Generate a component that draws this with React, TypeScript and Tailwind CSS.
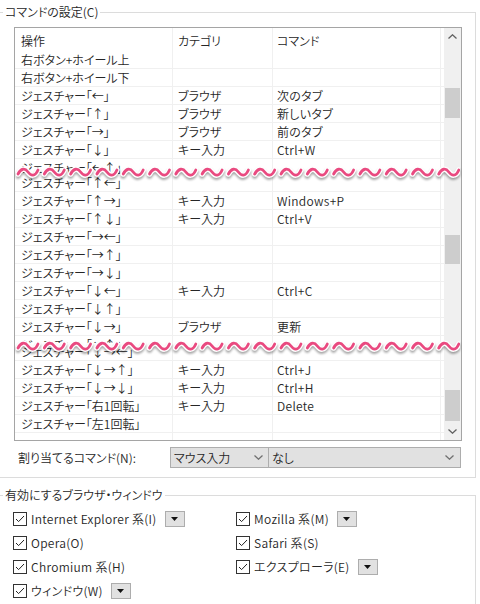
import clsx from "clsx";

type Row = { op: string; cat?: string; cmd?: string; cut?: string };

const rows: Row[] = [
  { op: "右ボタン+ホイール上" },
  { op: "右ボタン+ホイール下" },
  { op: "ジェスチャー「←」", cat: "ブラウザ", cmd: "次のタブ" },
  { op: "ジェスチャー「↑」", cat: "ブラウザ", cmd: "新しいタブ" },
  { op: "ジェスチャー「→」", cat: "ブラウザ", cmd: "前のタブ" },
  { op: "ジェスチャー「↓」", cat: "キー入力", cmd: "Ctrl+W" },
  { op: "ジェスチャー「←↑」", cut: "h-[15px]" },
  { op: "ジェスチャー「↑←」" },
  { op: "ジェスチャー「↑→」", cat: "キー入力", cmd: "Windows+P" },
  { op: "ジェスチャー「↑↓」", cat: "キー入力", cmd: "Ctrl+V" },
  { op: "ジェスチャー「→←」" },
  { op: "ジェスチャー「→↑」" },
  { op: "ジェスチャー「→↓」" },
  { op: "ジェスチャー「↓←」", cat: "キー入力", cmd: "Ctrl+C" },
  { op: "ジェスチャー「↓↑」" },
  { op: "ジェスチャー「↓→」", cat: "ブラウザ", cmd: "更新" },
  { op: "ジェスチャー「←↑←」", cut: "h-[7px]" },
  { op: "ジェスチャー「↓→←」" },
  { op: "ジェスチャー「↓→↑」", cat: "キー入力", cmd: "Ctrl+J" },
  { op: "ジェスチャー「↓→↓」", cat: "キー入力", cmd: "Ctrl+H" },
  { op: "ジェスチャー「右1回転」", cat: "キー入力", cmd: "Delete" },
  { op: "ジェスチャー「左1回転」" },
];

const browsers = [
  [
    { label: "Internet Explorer 系(I)", drop: true },
    { label: "Mozilla 系(M)", drop: true },
  ],
  [{ label: "Opera(O)" }, { label: "Safari 系(S)" }],
  [{ label: "Chromium 系(H)" }, { label: "エクスプローラ(E)", drop: true }],
  [{ label: "ウィンドウ(W)", drop: true }],
];

const Wave = ({ className }: { className: string }) => (
  <svg
    className={clsx(
      "absolute left-[1px] h-[16px] w-[444px] drop-shadow-[0_2px_1px_rgba(0,0,0,0.35)]",
      className,
    )}
    viewBox="0 0 444 16"
  >
    {Array.from({ length: 17 }).map((_, i) => (
      <g key={i} transform={`translate(${i * 26.3 + 2} 4)`}>
        <path
          d="M0 6 C3 0 7 0 10 4 S17 9 20 2"
          fill="none"
          stroke="#fff"
          strokeWidth={5.5}
          strokeLinecap="round"
        />
        <path
          d="M0 6 C3 0 7 0 10 4 S17 9 20 2"
          fill="none"
          stroke="#e94a80"
          strokeWidth={2.8}
          strokeLinecap="round"
        />
      </g>
    ))}
  </svg>
);

const Chevron = ({ up, className }: { up?: boolean; className?: string }) => (
  <svg width="9" height="5" viewBox="0 0 9 5" className={className}>
    <path
      d={up ? "M0.5 4.5 L4.5 0.8 L8.5 4.5" : "M0.5 0.5 L4.5 4.2 L8.5 0.5"}
      fill="none"
      stroke="currentColor"
      strokeWidth={1.3}
    />
  </svg>
);

const Check = () => (
  <span className="flex h-[14px] w-[14px] shrink-0 items-center justify-center border border-[#333] bg-white">
    <svg width="12" height="12" viewBox="0 0 12 12">
      <path d="M2 6 L4.6 8.6 L10 3" fill="none" stroke="#222" strokeWidth={1} />
    </svg>
  </span>
);

const DropBtn = () => (
  <span className="ml-[8px] flex h-[16px] w-[20px] items-center justify-center border border-[#adadad] bg-[#e1e1e1]">
    <svg width="7" height="4" viewBox="0 0 7 4">
      <path d="M0 0H7L3.5 4Z" fill="#111" />
    </svg>
  </span>
);

const GroupTitle = ({ children }: { children: string }) => (
  <div className="-mt-[9px] ml-[3px] w-fit bg-white px-[2px] leading-[16px]">{children}</div>
);

export default function App() {
  return (
    <div className="h-[604px] w-[480px] overflow-hidden bg-white pt-[12px] font-['Noto_Sans_CJK_JP',sans-serif] text-[12px] [font-weight:350] text-[#262626] [font-feature-settings:'palt']">
      {/* コマンドの設定 */}
      <div className="mr-[4px] h-[466px] border-t border-r border-b border-[#dcdcdc]">
        <GroupTitle>コマンドの設定(C)</GroupTitle>

        <div className="relative mt-[7px] ml-[14px] flex h-[414px] w-[448px] border border-[#a5a5a5]">
          <div className="flex w-[429px] flex-col">
            <div className="flex h-[23px] shrink-0 items-center leading-[17px]">
              <div className="h-full w-[158px] border-r border-[#f0f0f0] pt-[4px] pl-[6px]">操作</div>
              <div className="h-full w-[100px] border-r border-[#f0f0f0] pt-[4px] pl-[5px]">カテゴリ</div>
              <div className="h-full w-[168px] border-r border-[#f0f0f0] pt-[4px] pl-[4px]">コマンド</div>
            </div>
            {rows.map((r) => (
              <div
                key={r.op}
                className={clsx(
                  "flex shrink-0 overflow-hidden leading-[17px]",
                  r.cut ? r.cut : "h-[18px] border-b border-[#f0f0f0]",
                )}
              >
                <div className="w-[158px] shrink-0 border-r border-[#f0f0f0] pl-[6px] whitespace-nowrap">{r.op}</div>
                <div className="w-[100px] shrink-0 border-r border-[#f0f0f0] pl-[5px]">{r.cat}</div>
                <div className="w-[168px] shrink-0 border-r border-[#f0f0f0] pl-[4px] tracking-[0.3px]">{r.cmd}</div>
              </div>
            ))}
            <div className="flex flex-1">
              <div className="w-[158px] border-r border-[#f0f0f0]" />
              <div className="w-[100px] border-r border-[#f0f0f0]" />
              <div className="w-[168px] border-r border-[#f0f0f0]" />
            </div>
          </div>

          {/* scrollbar */}
          <div className="flex w-[17px] flex-col bg-[#f0f0f0] text-[#606060]">
            <div className="flex h-[17px] items-center justify-center">
              <Chevron up />
            </div>
            <div className="h-[43px]" />
            <div className="mx-[1px] h-[30px] bg-[#cdcdcd]" />
            <div className="h-[117px]" />
            <div className="mx-[1px] h-[29px] bg-[#cdcdcd]" />
            <div className="h-[126px]" />
            <div className="mx-[1px] h-[31px] bg-[#cdcdcd]" />
            <div className="flex-1" />
            <div className="flex h-[17px] items-center justify-center">
              <Chevron />
            </div>
          </div>

          <Wave className="top-[136px]" />
          <Wave className="top-[310px]" />
        </div>

        <div className="mt-[6px] flex h-[21px] items-center">
          <div className="w-[170px] pl-[18px]">割り当てるコマンド(N):</div>
          <div className="flex h-full w-[99px] items-center justify-between border border-[#adadad] bg-[#e1e1e1] pr-[5px] pl-[3px]">
            <span>マウス入力</span>
            <Chevron className="text-[#707070]" />
          </div>
          <div className="-ml-px flex h-full w-[193px] items-center justify-between border border-[#adadad] bg-[#e1e1e1] pr-[6px] pl-[3px]">
            <span>なし</span>
            <Chevron className="text-[#707070]" />
          </div>
        </div>
      </div>

      {/* 有効にするブラウザ・ウィンドウ */}
      <div className="mt-[17px] mr-[4px] h-[120px] border-t border-r border-[#dcdcdc]">
        <GroupTitle>有効にするブラウザ・ウィンドウ</GroupTitle>
        <div className="mt-[4px] flex flex-col">
          {browsers.map((row, i) => (
            <div key={i} className="flex h-[24px] items-center">
              {row.map((b) => (
                <div key={b.label} className="flex w-[223px] items-center pl-[13px]">
                  <Check />
                  <span className="ml-[4px] whitespace-nowrap tracking-[0.3px]">{b.label}</span>
                  {b.drop && <DropBtn />}
                </div>
              ))}
            </div>
          ))}
        </div>
      </div>
    </div>
  );
}
